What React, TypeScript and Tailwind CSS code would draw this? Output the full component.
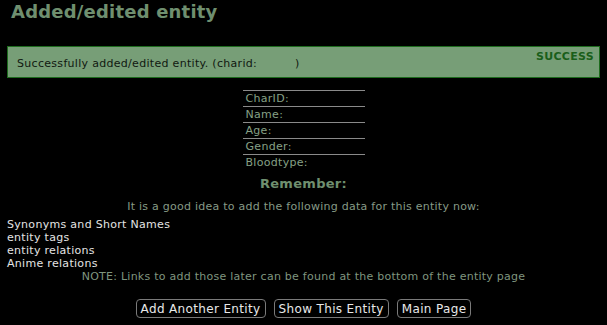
import React from "react";

export default function App() {
  const rows = ["CharID:", "Name:", "Age:", "Gender:", "Bloodtype:"];
  return (
    <div className="w-[607px] h-[325px] bg-black overflow-hidden font-['DejaVu_Sans',sans-serif]">
      <h1 className="pl-[11px] pt-[0px] h-[46px] text-[18px] tracking-[0.2px] font-bold leading-[24px] text-[#6f8f6f]">
        Added/edited entity
      </h1>
      <div className="mx-[7px] h-[32px] border border-[#1d6b1d] bg-[#779e77] relative">
        <div className="absolute right-[5px] top-[3px] text-[11px] tracking-[0.3px] font-bold text-[#1a5e1a] leading-[14px]">
          SUCCESS
        </div>
        <div className="pl-[9px] pt-[10px] text-[11px] tracking-[0.3px] leading-[14px] text-[#101810] whitespace-pre">
          Successfully added/edited entity. (charid:          )
        </div>
      </div>
      <div className="mt-[12px] w-[122px] mx-auto">
        {rows.map((r) => (
          <div key={r} className="h-[16px] border-t border-[#8a8a8a] pl-[3px] text-[11px] tracking-[0.3px] leading-[16px] text-[#86a086]">
            {r}
          </div>
        ))}
      </div>
      <div className="mt-[6px] text-center text-[13px] tracking-[0.3px] font-bold leading-[16px] text-[#6f8f6f]">
        Remember:
      </div>
      <div className="mt-[8px] text-center text-[11px] tracking-[0.25px] leading-[14px] text-[#869a86]">
        It is a good idea to add the following data for this entity now:
      </div>
      <div className="mt-[4px] pl-[7px] text-[11px] tracking-[0.3px] leading-[13px] text-[#e4e4e4]">
        <div>Synonyms and Short Names</div>
        <div>entity tags</div>
        <div>entity relations</div>
        <div>Anime relations</div>
      </div>
      <div className="text-center text-[11px] tracking-[0.25px] leading-[13px] text-[#7f957f]">
        NOTE: Links to add those later can be found at the bottom of the entity page
      </div>
      <div className="mt-[16px] flex justify-center gap-[8px]">
        {["Add Another Entity", "Show This Entity", "Main Page"].map((b) => (
          <button key={b} className="h-[19px] px-[4px] border border-[#7a7a7a] rounded-[4px] text-[12px] tracking-[0.35px] leading-[16px] text-[#e8e8e8] bg-black">
            {b}
          </button>
        ))}
      </div>
    </div>
  );
}
